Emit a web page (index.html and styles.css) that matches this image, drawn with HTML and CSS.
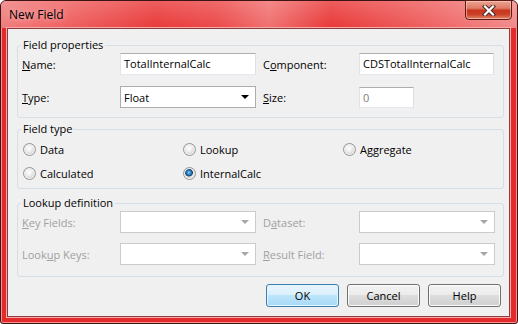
FILE: index.html
```html
<!DOCTYPE html>
<html>
<head>
<meta charset="utf-8">
<link rel="stylesheet" href="styles.css">
</head>
<body>
<div class="window">
  <div class="titlebar">
    <span class="title">New Field</span>
    <div class="close">
      <svg width="14" height="11" viewBox="0 0 14 11">
        <path d="M3 1.5 L11 9.5 M11 1.5 L3 9.5" stroke="#4d2a2a" stroke-width="4.2" stroke-linecap="square" fill="none"/>
        <path d="M3 1.5 L11 9.5 M11 1.5 L3 9.5" stroke="#ffffff" stroke-width="2.2" stroke-linecap="square" fill="none"/>
      </svg>
    </div>
  </div>
  <div class="client">
    <fieldset class="group g1">
      <legend>Field properties</legend>
      <div class="form">
        <span class="lbl"><u>N</u>ame:</span>
        <div class="edit">TotalInternalCalc</div>
        <span class="lbl c3">C<u>o</u>mponent:</span>
        <div class="edit w135">CDSTotalInternalCalc</div>
        <span class="lbl"><u>T</u>ype:</span>
        <div class="combo"><span>Float</span><i class="arrow"></i></div>
        <span class="lbl c3"><u>S</u>ize:</span>
        <div class="edit size">0</div>
      </div>
    </fieldset>
    <fieldset class="group g2">
      <legend>Field type</legend>
      <div class="radios">
        <div class="radio"><i class="dot"></i><span>Data</span></div>
        <div class="radio"><i class="dot"></i><span>Lookup</span></div>
        <div class="radio"><i class="dot"></i><span>Aggregate</span></div>
        <div class="radio"><i class="dot"></i><span>Calculated</span></div>
        <div class="radio"><i class="dot checked"></i><span>InternalCalc</span></div>
      </div>
    </fieldset>
    <fieldset class="group g3">
      <legend>Lookup definition</legend>
      <div class="form form3">
        <span class="lbl dis"><u>K</u>ey Fields:</span>
        <div class="combo dis"><span></span><i class="arrow"></i></div>
        <span class="lbl dis c3">D<u>a</u>taset:</span>
        <div class="combo dis w136"><span></span><i class="arrow"></i></div>
        <span class="lbl dis">Look<u>u</u>p Keys:</span>
        <div class="combo dis"><span></span><i class="arrow"></i></div>
        <span class="lbl dis c3"><u>R</u>esult Field:</span>
        <div class="combo dis w136"><span></span><i class="arrow"></i></div>
      </div>
    </fieldset>
    <div class="buttons">
      <div class="btn ok">OK</div>
      <div class="btn">Cancel</div>
      <div class="btn">Help</div>
    </div>
  </div>
</div>
</body>
</html>
```
FILE: styles.css
```css
* { box-sizing: border-box; }
html, body { margin: 0; padding: 0; }
body {
  width: 518px;
  height: 324px;
  overflow: hidden;
  background: #ffffff;
  font-family: "Open Sans", "Noto Sans", sans-serif;
  font-size: 11px;
  color: #000;
}
.window {
  width: 518px;
  height: 324px;
  display: flex;
  flex-direction: column;
  border: 1px solid #3d1414;
  border-radius: 6px 6px 3px 3px;
  background: #e52a2c;
  box-shadow: inset 0 0 0 1px #f29494;
}
.titlebar {
  height: 27px;
  display: flex;
  align-items: center;
  justify-content: space-between;
  padding-left: 8px;
  border-radius: 5px 5px 0 0;
  background:
    linear-gradient(180deg, rgba(255,255,255,0.18) 0%, rgba(255,255,255,0) 100%),
    linear-gradient(90deg, #f07c7c 0%, #ef6262 12%, #e93a3a 30%, #ec4a4a 42%, #f07070 52%, #e93838 64%, #ee5a5a 80%, #f38a8a 100%);
}
.title {
  font-size: 12px;
  color: #000;
  text-shadow: 0 0 6px rgba(255,255,255,0.6);
}
.close {
  align-self: flex-start;
  margin-top: -1px;
  margin-right: 5px;
  width: 47px;
  height: 20px;
  border: 1px solid #5e1a16;
  border-radius: 0 0 4px 4px;
  background: linear-gradient(180deg, #eba594 0%, #df7a64 40%, #c8361e 52%, #cc4128 75%, #e0886a 100%);
  box-shadow: inset 0 0 0 1px rgba(255,210,200,0.55);
  display: flex;
  align-items: center;
  justify-content: center;
}
.client {
  flex: 1;
  margin: 0 7px 6px 6px;
  background: #f0f0f0;
  border: 1px solid #8d3c3c;
  box-shadow: 0 0 0 1px #f5aaaa;
  padding: 8px 5px 0 9px;
  display: flex;
  flex-direction: column;
}
.group {
  margin: 0;
  padding: 0;
  border: 1px solid #d5dfe5;
  border-radius: 3px;
  min-width: 0;
}
.group legend {
  margin-left: 3px;
  padding: 0 2px;
  line-height: 16px;
  font-size: 11px;
}
.g2 { margin-top: 3px; }
.g3 { margin-top: 6px; }
.form {
  display: grid;
  grid-template-columns: 98px 136px 103px 136px;
  grid-auto-rows: 22px;
  row-gap: 11px;
  align-items: center;
  padding: 0 0 9px 4px;
}
.form3 {
  row-gap: 10px;
  padding-bottom: 11px;
}
.lbl { white-space: nowrap; }
.lbl.dis { color: #a0a0a0; }
.c3 { padding-left: 7px; }
.edit {
  height: 22px;
  width: 136px;
  background: #fff;
  border: 1px solid;
  border-color: #abadb3 #dbdfe6 #e3e9ef #e2e3ea;
  padding: 0 3px;
  line-height: 20px;
  white-space: nowrap;
}
.edit.w135 { width: 135px; }
.edit.size {
  width: 55px;
  height: 21px;
  line-height: 19px;
  color: #808080;
}
.combo {
  height: 22px;
  width: 136px;
  background: #fff;
  border: 1px solid #abadb3;
  display: flex;
  align-items: center;
  justify-content: space-between;
  padding: 0 6px 0 3px;
}
.combo.w136 { width: 136px; }
.combo .arrow {
  width: 0;
  height: 0;
  border-left: 4px solid transparent;
  border-right: 4px solid transparent;
  border-top: 4px solid #000;
}
.combo.dis { border-color: #c9cbcf; }
.combo.dis .arrow { border-top-color: #a7a7a7; }
.radios {
  display: grid;
  grid-template-columns: 160px 160px 160px;
  grid-auto-rows: 16px;
  row-gap: 8px;
  padding: 4px 0 7px 5px;
}
.radio {
  display: flex;
  align-items: center;
  gap: 4px;
  white-space: nowrap;
}
.dot {
  width: 13px;
  height: 13px;
  border-radius: 50%;
  border: 1px solid #959595;
  background: radial-gradient(circle at 45% 40%, #ffffff 0%, #eeeeee 35%, #d2d2d2 70%, #c4c4c4 100%);
  box-shadow: inset 0 0 0 1px #f4f4f4;
}
.dot.checked {
  background:
    radial-gradient(circle at 45% 42%, #a8e0fb 0px, #3a8fd0 1.5px, #1a5d95 3px, #123f68 3.6px, rgba(0,0,0,0) 4.2px),
    radial-gradient(circle at 45% 40%, #ffffff 0%, #eeeeee 35%, #d2d2d2 70%, #c4c4c4 100%);
}
.buttons {
  display: flex;
  justify-content: flex-end;
  gap: 8px;
  margin-top: 7px;
  margin-right: 3px;
}
.btn {
  width: 73px;
  height: 23px;
  border: 1px solid #707070;
  border-radius: 3px;
  background: linear-gradient(180deg, #f2f2f2 0%, #ebebeb 50%, #dddddd 50%, #cfcfcf 100%);
  box-shadow: inset 0 0 0 1px #fbfbfb;
  display: flex;
  align-items: center;
  justify-content: center;
  line-height: 21px;
}
.btn.ok {
  border-color: #3c7fb1;
  background: linear-gradient(180deg, #e9f5fc 0%, #d9effc 50%, #bde5fc 50%, #a7d9f5 100%);
  box-shadow: inset 0 0 0 1px #e3f4fd;
}
```
